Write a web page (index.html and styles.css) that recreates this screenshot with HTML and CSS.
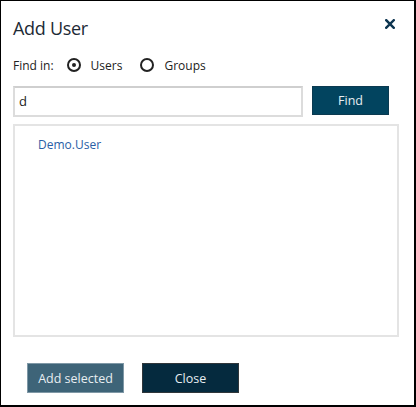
FILE: index.html
```html
<!DOCTYPE html>
<html>
<head>
<meta charset="utf-8">
<link rel="stylesheet" href="styles.css">
</head>
<body>
<div class="dialog">
  <div class="header">
    <h1 class="title">Add User</h1>
    <span class="close-x">
      <svg width="10" height="10" viewBox="0 0 10 10"><path d="M1.2 1.2 L8.8 8.8 M8.8 1.2 L1.2 8.8" stroke="#0d3550" stroke-width="2.4" stroke-linecap="square"/></svg>
    </span>
  </div>
  <div class="find-in">
    <span class="label">Find in:</span>
    <span class="radio checked"></span><span class="opt">Users</span>
    <span class="radio"></span><span class="opt">Groups</span>
  </div>
  <div class="search-row">
    <div class="input">d</div>
    <button class="btn find">Find</button>
  </div>
  <div class="list">
    <div class="item">Demo.User</div>
  </div>
  <div class="footer">
    <button class="btn add">Add selected</button>
    <button class="btn close">Close</button>
  </div>
</div>
</body>
</html>
```

FILE: styles.css
```css
html, body {
  margin: 0;
  padding: 0;
  background: #fff;
}
.dialog {
  width: 416px;
  height: 407px;
  box-sizing: border-box;
  border: 1px solid #000;
  border-right-width: 2px;
  border-bottom-width: 2px;
  font-family: "Open Sans", "Noto Sans", sans-serif;
  color: #1b1b1b;
  padding: 0 0 0 12px;
  display: flex;
  flex-direction: column;
}
.header {
  display: flex;
  justify-content: space-between;
  align-items: flex-start;
  height: 48px;
}
.title {
  margin: 15px 0 0 0;
  font-size: 18px;
  font-weight: 400;
  letter-spacing: -0.3px;
  color: #1d2a35;
  line-height: 24px;
}
.close-x {
  margin: 18px 19px 0 0;
  width: 10px;
  height: 10px;
  display: flex;
}
.find-in {
  display: flex;
  align-items: center;
  height: 32px;
  font-size: 12px;
  color: #222;
}
.label {
  margin-right: 13px;
}
.radio {
  width: 14px;
  height: 14px;
  box-sizing: border-box;
  border: 2px solid #222;
  border-radius: 50%;
  margin-right: 10px;
  position: relative;
}
.radio.checked::after {
  content: "";
  position: absolute;
  left: 3px;
  top: 3px;
  width: 4px;
  height: 4px;
  border-radius: 50%;
  background: #222;
}
.opt {
  margin-right: 18px;
}
.search-row {
  display: flex;
  align-items: flex-start;
  margin-top: 5px;
  height: 38px;
}
.input {
  width: 290px;
  height: 31px;
  box-sizing: border-box;
  border: 2px solid #dcdcdc;
  border-top-color: #cfcfcf;
  font-size: 13px;
  line-height: 27px;
  padding-left: 4px;
  color: #222;
}
.btn {
  font-family: "Open Sans", "Noto Sans", sans-serif;
  font-size: 12.5px;
  border: 1px solid transparent;
  color: #e8eef2;
  padding: 0;
  cursor: pointer;
}
.find {
  margin-left: 9px;
  width: 77px;
  height: 29px;
  background: #02445f;
  border-color: #0b3a50;
}
.list {
  width: 386px;
  height: 213px;
  box-sizing: border-box;
  border: 2px solid #e4e4e4;
  padding: 9px 0 0 23px;
}
.item {
  font-size: 12px;
  color: #2a5ea6;
  line-height: 20px;
}
.footer {
  display: flex;
  gap: 18px;
  padding-left: 14px;
  margin-top: 26px;
}
.add {
  width: 97px;
  height: 30px;
  background: #3e6478;
  border-color: #7f98a6;
}
.close {
  width: 97px;
  height: 30px;
  background: #052a3e;
  border-color: #30363a;
}
```
